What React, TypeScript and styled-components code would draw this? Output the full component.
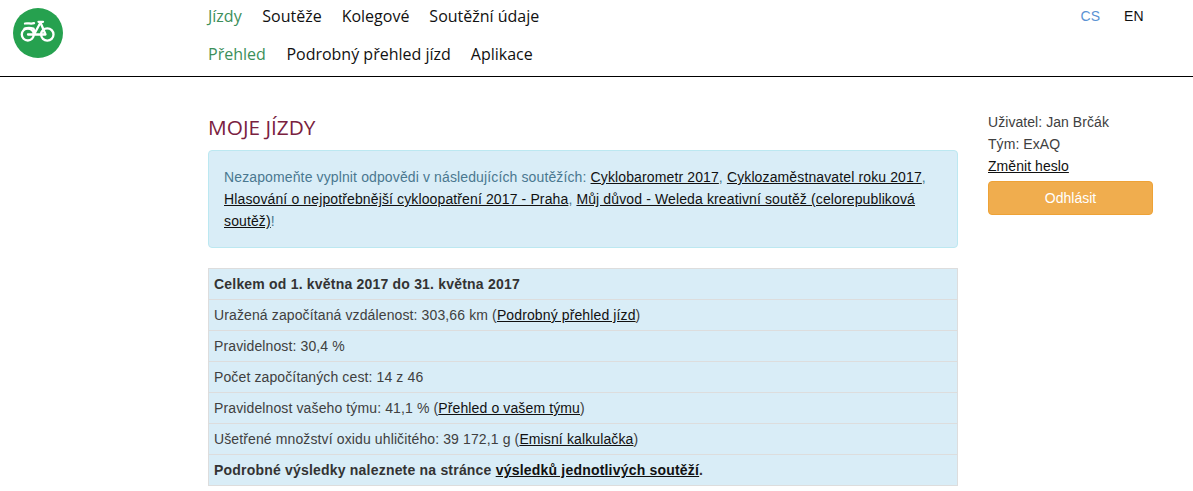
import React from "react";
import styled, { createGlobalStyle } from "styled-components";

const Global = createGlobalStyle`
  html, body { margin: 0; padding: 0; background: #fff; }
  body { font-family: "Liberation Sans", Arial, sans-serif; font-size: 14px; line-height: 20px; color: #404040; }
  * { box-sizing: border-box; }
`;

const Page = styled.div`
  width: 1193px;
  height: 491px;
  overflow: hidden;
`;

const Header = styled.header`
  height: 77px;
  border-bottom: 1px solid #000;
  display: grid;
  grid-template-columns: 208px 1fr auto;
`;

const LogoCell = styled.div`
  padding: 8px 0 0 13px;
`;

const Nav = styled.nav`
  display: flex;
  flex-direction: column;
`;

const NavRow = styled.div<{ $height: number }>`
  display: flex;
  gap: 20px;
  align-items: center;
  height: ${(p) => p.$height}px;
  font-family: "Open Sans", sans-serif;
  font-size: 16px;
`;

const NavLink = styled.a<{ $active?: boolean }>`
  color: ${(p) => (p.$active ? "#3c8f5a" : "#111")};
  margin-right: ${(p) => (p.$active ? 0.6 : 0)}px;
  text-decoration: none;
`;

const Lang = styled.div`
  display: flex;
  gap: 24px;
  padding: 6px 49.5px 0 0;
  font-size: 14px;
`;

const LangLink = styled.a<{ $active?: boolean }>`
  color: ${(p) => (p.$active ? "#5b93d3" : "#111")};
  text-decoration: none;
`;

const Body = styled.div`
  display: grid;
  grid-template-columns: 750px 165px;
  gap: 30px;
  padding: 0 0 0 208px;
`;

const Main = styled.main``;

const Title = styled.h1`
  margin: 37px 0 9px;
  height: 27px;
  font-family: "Open Sans", sans-serif;
  font-size: 20.8px;
  line-height: 27px;
  font-weight: 400;
  color: #7a2140;
`;

const Alert = styled.div`
  height: 98px;
  padding: 15px;
  line-height: 22px;
  letter-spacing: 0.125px;
  background: #d9edf7;
  border: 1px solid #bce8f1;
  border-radius: 4px;
  color: #4a7890;
  margin-bottom: 20px;
`;

const TextLink = styled.a`
  color: #111;
  text-decoration: underline;
`;

const Summary = styled.div`
  border: 1px solid #ddd;
  border-bottom: 0;
  background: #d9edf7;
`;

const SummaryRow = styled.div<{ $bold?: boolean }>`
  height: 31px;
  padding: 5px;
  border-bottom: 1px solid #ddd;
  font-weight: ${(p) => (p.$bold ? 700 : 400)};
  color: ${(p) => (p.$bold ? "#333" : "#404040")};
  letter-spacing: ${(p) => (p.$bold ? 0.2 : 0.12)}px;
`;

const Side = styled.aside`
  padding-top: 34px;
  line-height: 22px;
`;

const SideLine = styled.div`
  letter-spacing: 0.06px;
`;

const Logout = styled.button`
  display: block;
  width: 100%;
  height: 34px;
  margin-top: 4px;
  background: #f0ad4e;
  border: 1px solid #eea236;
  border-radius: 4px;
  color: #fff;
  font-family: "Liberation Sans", Arial, sans-serif;
  font-size: 14px;
  line-height: 20px;
`;

const BikeLogo = () => (
  <svg width="50" height="50" viewBox="0 0 50 50" aria-hidden="true">
    <circle cx="25" cy="25" r="25" fill="#26a14f" />
    <g fill="none" stroke="#fff" strokeWidth="2.3" strokeLinecap="round" strokeLinejoin="round">
      <circle cx="14.8" cy="26.5" r="6" />
      <circle cx="34.3" cy="26.5" r="6.2" />
      <path d="M15 26.5h17.5L27.5 14.5l-6.5 12" />
      <path d="M25.5 13.8h4.5" />
      <path d="M12 15.5c3-.8 5.5.8 9-.3" />
      <path d="M11.5 20.5c3-.8 6-.8 9 0l1 3" />
    </g>
  </svg>
);

export default function App() {
  return (
    <Page>
      <Global />
      <Header>
        <LogoCell>
          <BikeLogo />
        </LogoCell>
        <Nav>
          <NavRow $height={32}>
            <NavLink $active>Jízdy</NavLink>
            <NavLink>Soutěže</NavLink>
            <NavLink>Kolegové</NavLink>
            <NavLink>Soutěžní údaje</NavLink>
          </NavRow>
          <NavRow $height={44}>
            <NavLink $active>Přehled</NavLink>
            <NavLink>Podrobný přehled jízd</NavLink>
            <NavLink>Aplikace</NavLink>
          </NavRow>
        </Nav>
        <Lang>
          <LangLink $active>CS</LangLink>
          <LangLink>EN</LangLink>
        </Lang>
      </Header>
      <Body>
        <Main>
          <Title>MOJE JÍZDY</Title>
          <Alert>
            Nezapomeňte vyplnit odpovědi v následujících soutěžích: <TextLink>Cyklobarometr 2017</TextLink>,{" "}
            <TextLink>Cyklozaměstnavatel roku 2017</TextLink>,{" "}
            <TextLink>Hlasování o nejpotřebnější cykloopatření 2017 - Praha</TextLink>,{" "}
            <TextLink>Můj důvod - Weleda kreativní soutěž (celorepubliková soutěž)</TextLink>!
          </Alert>
          <Summary>
            <SummaryRow $bold>Celkem od 1. května 2017 do 31. května 2017</SummaryRow>
            <SummaryRow>
              Uražená započítaná vzdálenost: 303,66 km (<TextLink>Podrobný přehled jízd</TextLink>)
            </SummaryRow>
            <SummaryRow>Pravidelnost: 30,4 %</SummaryRow>
            <SummaryRow>Počet započítaných cest: 14 z 46</SummaryRow>
            <SummaryRow>
              Pravidelnost vašeho týmu: 41,1 % (<TextLink>Přehled o vašem týmu</TextLink>)
            </SummaryRow>
            <SummaryRow>
              Ušetřené množství oxidu uhličitého: 39 172,1 g (<TextLink>Emisní kalkulačka</TextLink>)
            </SummaryRow>
            <SummaryRow $bold>
              Podrobné výsledky naleznete na stránce <TextLink>výsledků jednotlivých soutěží</TextLink>.
            </SummaryRow>
          </Summary>
        </Main>
        <Side>
          <SideLine>Uživatel: Jan Brčák</SideLine>
          <SideLine>Tým: ExAQ</SideLine>
          <SideLine>
            <TextLink>Změnit heslo</TextLink>
          </SideLine>
          <Logout>Odhlásit</Logout>
        </Side>
      </Body>
    </Page>
  );
}
